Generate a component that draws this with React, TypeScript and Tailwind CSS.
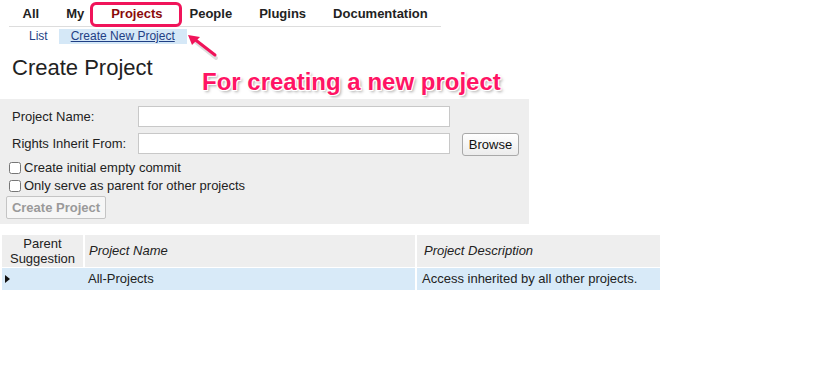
import { useState } from 'react';

const font = { fontFamily: '"Liberation Sans", Arial, Helvetica, sans-serif' };

export default function App() {
  const [initialCommit, setInitialCommit] = useState(false);
  const [parentOnly, setParentOnly] = useState(false);

  const navItems = ['All', 'My', 'Projects', 'People', 'Plugins', 'Documentation'];

  return (
    <div className="relative w-[815px] h-[367px] bg-white text-[13px] text-[#222]" style={font}>
      {/* Top menu */}
      <div className="ml-[9px] w-[432px] border-b border-[#dddddd] flex items-end h-[27px]">
        {navItems.map((item) => (
          <a
            key={item}
            href="#"
            className={`px-[13.5px] pb-[4px] font-bold text-[13px] leading-[16px] ${
              item === 'Projects' ? 'text-[#8b0a0a]' : 'text-[#222]'
            }`}
          >
            {item}
          </a>
        ))}
      </div>

      {/* Sub menu */}
      <div className="flex items-center h-[15px] mt-[2px]">
        <a href="#" className="ml-[29px] text-[12px] leading-[15px] text-[#1f3f85]">List</a>
        <div className="ml-[11px] w-[128px] h-[15px] bg-[#d5e8f7] flex items-center pl-[12px]">
          <a href="#" className="text-[12px] leading-[15px] text-[#1f3f85] underline">Create New Project</a>
        </div>
      </div>

      {/* Heading */}
      <h1 className="ml-[12px] mt-[11px] text-[22px] leading-[26px] text-[#222]">Create Project</h1>

      {/* Form */}
      <div className="mt-[18px] w-[529px] h-[125px] bg-[#eeeeee] pt-[7px]">
        <div className="flex items-center h-[21px]">
          <label className="w-[138px] pl-[12px]">Project Name:</label>
          <input className="w-[312px] h-[21px] bg-white border border-[#c8c8c8] outline-none px-1" />
        </div>
        <div className="flex items-center h-[23px] mt-[5px]">
          <label className="w-[138px] pl-[12px]">Rights Inherit From:</label>
          <input className="w-[312px] h-[21px] bg-white border border-[#c8c8c8] outline-none px-1" />
          <button className="ml-[12px] w-[57px] h-[23px] border border-[#a9a9a9] rounded-[3px] bg-gradient-to-b from-[#ffffff] to-[#ececec] text-[13px] text-[#111] mt-[2px]">
            Browse
          </button>
        </div>
        <label className="flex items-center h-[18px] mt-[4px] pl-[9px]">
          <input
            type="checkbox"
            checked={initialCommit}
            onChange={() => setInitialCommit(!initialCommit)}
            className="w-[12px] h-[12px] m-0 mr-[3px] accent-[#3b82f6]"
          />
          Create initial empty commit
        </label>
        <label className="flex items-center h-[18px] pl-[9px]">
          <input
            type="checkbox"
            checked={parentOnly}
            onChange={() => setParentOnly(!parentOnly)}
            className="w-[12px] h-[12px] m-0 mr-[3px] accent-[#3b82f6]"
          />
          Only serve as parent for other projects
        </label>
        <button
          disabled
          className="ml-[6px] mt-[1px] w-[100px] h-[23px] border border-[#c4c4c4] rounded-[2px] bg-[#f6f6f6] text-[13px] font-bold text-[#9a9a9a]"
        >
          Create Project
        </button>
      </div>

      {/* Suggestions table */}
      <table className="ml-[2px] mt-[11px] w-[658px] border-collapse text-[13px]">
        <thead>
          <tr className="bg-[#eeeeee] h-[32px]">
            <th className="w-[82px] font-normal text-center leading-[15px] border-r-2 border-white align-middle">
              Parent
              <br />
              Suggestion
            </th>
            <th className="w-[332px] font-normal italic text-left pl-[4px] border-r-2 border-white">Project Name</th>
            <th className="font-normal italic text-left pl-[7px]">Project Description</th>
          </tr>
        </thead>
        <tbody>
          <tr className="bg-[#d8eaf8] h-[23px] border-t border-white">
            <td className="pl-[3px]">
              <svg width="6" height="10" viewBox="0 0 6 10">
                <polygon points="0,1 5,5 0,9" fill="#111" />
              </svg>
            </td>
            <td className="pl-[4px] border-r-2 border-white">All-Projects</td>
            <td className="pl-[5px]">Access inherited by all other projects.</td>
          </tr>
        </tbody>
      </table>

      {/* Annotation: highlight box */}
      <div className="absolute left-[90px] top-[2px] w-[92px] h-[25px] border-[3px] border-[#f0145a] rounded-[6px] pointer-events-none" />

      {/* Annotation: arrow */}
      <svg className="absolute left-[185px] top-[33px] pointer-events-none" width="40" height="30" viewBox="0 0 40 30">
        <line x1="6" y1="4" x2="30" y2="23" stroke="#a0a0a0" strokeOpacity="0.35" strokeWidth="4" strokeLinecap="round" transform="translate(1,2)" />
        <line x1="8" y1="5" x2="30" y2="22" stroke="#f0145a" strokeWidth="3" strokeLinecap="round" />
        <polygon points="3,2 15,4 7,12" fill="#f0145a" />
      </svg>

      {/* Annotation: caption */}
      <div
        className="absolute left-[202px] top-[67px] text-[24px] leading-[30px] font-bold text-[#ff1464] whitespace-nowrap pointer-events-none"
        style={{
          textShadow:
            '1px 1px 0 #fff, -1px -1px 0 #fff, 1px -1px 0 #fff, -1px 1px 0 #fff, 2px 2px 3px rgba(0,0,0,0.35)',
        }}
      >
        For creating a new project
      </div>
    </div>
  );
}
